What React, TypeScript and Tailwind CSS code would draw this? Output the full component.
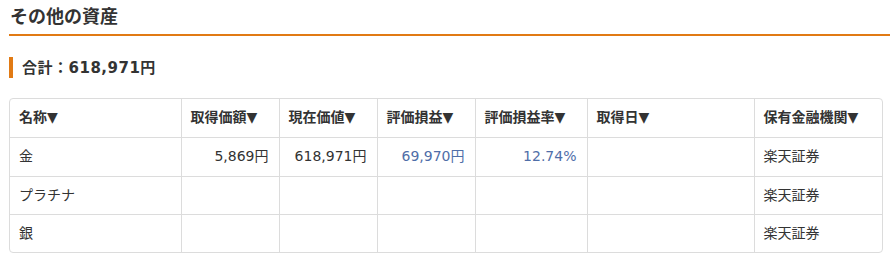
import React from "react";

const font = { fontFamily: '"DejaVu Sans", "Noto Sans CJK JP", sans-serif' };
const cjk = { fontFamily: '"Noto Sans CJK JP", sans-serif' };

type Row = {
  name: string;
  cost: string;
  value: string;
  gain: string;
  rate: string;
  date: string;
  inst: string;
};

const rows: Row[] = [
  { name: "金", cost: "5,869円", value: "618,971円", gain: "69,970円", rate: "12.74%", date: "", inst: "楽天証券" },
  { name: "プラチナ", cost: "", value: "", gain: "", rate: "", date: "", inst: "楽天証券" },
  { name: "銀", cost: "", value: "", gain: "", rate: "", date: "", inst: "楽天証券" },
];

const headers = [
  { label: "名称", w: "w-[171px]" },
  { label: "取得価額", w: "w-[98px]" },
  { label: "現在価値", w: "w-[98px]" },
  { label: "評価損益", w: "w-[98px]" },
  { label: "評価損益率", w: "w-[112px]" },
  { label: "取得日", w: "w-[167px]" },
  { label: "保有金融機関", w: "" },
];

export default function App() {
  return (
    <div className="w-[890px] h-[280px] bg-white text-[#333]" style={font}>
      <div className="ml-[9px] pt-[4px] pb-[4px] border-b-2 border-[#e17a14]">
        <h2 className="text-[18px] leading-[26px] font-bold pl-[1px]">その他の資産</h2>
      </div>
      <div className="ml-[9px] mt-[21px] border-l-4 border-[#e17a14] pl-[9px] h-[21px] flex items-center">
        <span className="text-[15px] font-bold leading-[21px] tracking-[0.5px]">
          合計<span style={cjk}>：</span>618,971円
        </span>
      </div>
      <div className="ml-[9px] mr-[7px] mt-[20px] border border-[#dcdcdc] rounded-[4px] overflow-hidden">
        <table className="w-full border-collapse text-[14px] table-fixed">
          <thead>
            <tr className="h-[38px]">
              {headers.map((h, i) => (
                <th
                  key={h.label}
                  className={`${h.w} ${i > 0 ? "border-l border-[#dcdcdc]" : ""} border-b border-[#dcdcdc] text-left font-bold px-[9px] whitespace-nowrap`}
                >
                  {h.label}▼
                </th>
              ))}
            </tr>
          </thead>
          <tbody>
            {rows.map((r, ri) => (
              <tr key={r.name} className={ri === 0 ? "h-[39px]" : "h-[38px]"}>
                <td className={`px-[9px] ${ri < rows.length - 1 ? "border-b border-[#dcdcdc]" : ""}`}>{r.name}</td>
                <td className={`px-[10px] text-right border-l border-[#dcdcdc] ${ri < rows.length - 1 ? "border-b" : ""}`}>{r.cost}</td>
                <td className={`px-[10px] text-right border-l border-[#dcdcdc] ${ri < rows.length - 1 ? "border-b" : ""}`}>{r.value}</td>
                <td className={`px-[10px] text-right border-l border-[#dcdcdc] text-[#4f6ea8] ${ri < rows.length - 1 ? "border-b" : ""}`}>{r.gain}</td>
                <td className={`px-[10px] text-right border-l border-[#dcdcdc] text-[#4f6ea8] ${ri < rows.length - 1 ? "border-b" : ""}`}>{r.rate}</td>
                <td className={`px-[9px] border-l border-[#dcdcdc] ${ri < rows.length - 1 ? "border-b" : ""}`}>{r.date}</td>
                <td className={`px-[9px] border-l border-[#dcdcdc] ${ri < rows.length - 1 ? "border-b" : ""}`}>{r.inst}</td>
              </tr>
            ))}
          </tbody>
        </table>
      </div>
    </div>
  );
}
